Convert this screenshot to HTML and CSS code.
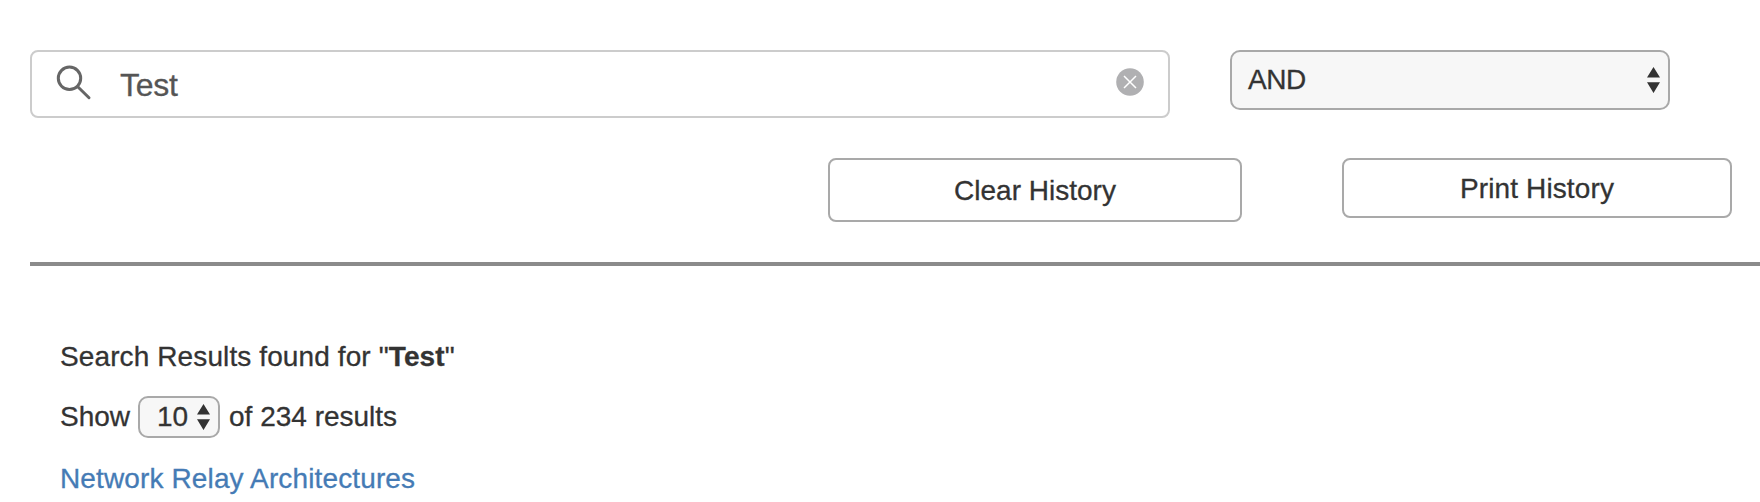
FILE: index.html
```
<!DOCTYPE html>
<html lang="en">
<head>
<meta charset="utf-8">
<title>Search Results</title>
<link rel="stylesheet" href="styles.css">
</head>
<body>
<header class="toolbar">
  <div class="search-row">
    <div class="search-box">
      <svg class="search-icon" width="36" height="36" viewBox="0 0 36 36"><circle cx="13.5" cy="13.3" r="11.2"/><path d="M21.5 21.5L33 32.7"/></svg>
      <span class="search-text">Test</span>
      <svg class="clear-icon" width="28" height="28" viewBox="0 0 28 28"><circle cx="14" cy="14" r="13.8"/><path d="M8 8L20 20M20 8L8 20"/></svg>
    </div>
    <div class="select operator">
      <span class="operator-text">AND</span>
      <svg class="arrows" width="14" height="26" viewBox="0 0 14 26"><path d="M6.5 0L13 10.5H0ZM0 15.2H13L6.5 26Z"/></svg>
    </div>
  </div>
  <div class="button-row">
    <div class="button clear-history"><span class="clear-text">Clear History</span></div>
    <div class="button print-history"><span class="print-text">Print History</span></div>
  </div>
</header>
<main class="results">
  <p class="summary">Search Results found for "<b>Test</b>"</p>
  <div class="paging">
    <span class="show-text">Show</span>
    <div class="select page-size">
      <span class="size-text">10</span>
      <svg class="arrows" width="14" height="26" viewBox="0 0 14 26"><path d="M6.5 0L13 10.5H0ZM0 15.2H13L6.5 26Z"/></svg>
    </div>
    <span class="count-text">of 234 results</span>
  </div>
  <a class="result-link">Network Relay Architectures</a>
</main>
</body>
</html>
```
FILE: styles.css
```
* { box-sizing: border-box; }

body {
  margin: 0;
  height: 502px;
  overflow: hidden;
  background: #fff;
  color: #333;
  font: 28px/40px "Liberation Sans", Arial, sans-serif;
  white-space: nowrap;
  -webkit-text-stroke: 0.3px currentColor;
}

.toolbar {
  height: 216px;
  margin: 50px 0 0 30px;
  border-bottom: 4px solid #8b8b8b;
}

.search-row {
  display: flex;
  align-items: flex-start;
  gap: 60px;
  height: 108px;
}

.search-box {
  display: flex;
  align-items: flex-start;
  width: 1140px;
  height: 68px;
  padding: 12px 24px 0;
  border: 2px solid #ccc;
  border-radius: 8px;
}

.search-icon {
  margin-top: 1px;
  fill: none;
  stroke: #666;
  stroke-width: 3;
  stroke-linecap: round;
}

.search-text {
  margin-left: 28px;
  color: #555;
  font-size: 32px;
  line-height: 42px;
  letter-spacing: -0.3px;
}

.clear-icon {
  margin: 4px 0 0 auto;
  fill: #b0b0b2;
}

.clear-icon path {
  stroke: #fff;
  stroke-width: 1.5;
}

.select {
  display: flex;
  border: 2px solid #a9a9a9;
  border-radius: 10px;
  background: #f7f7f7;
}

.arrows {
  flex: none;
  fill: #333;
}

.operator {
  justify-content: space-between;
  width: 440px;
  height: 60px;
  padding: 8px 7px 0 16px;
}

.operator-text { letter-spacing: -0.4px; }

.operator .arrows { margin-top: 7px; }

.button-row {
  display: flex;
  gap: 100px;
  margin-left: 798px;
}

.button {
  border: 2px solid #a9a9a9;
  border-radius: 8px;
  text-align: center;
}

.clear-history {
  width: 414px;
  height: 64px;
  padding-top: 11px;
}

.print-history {
  width: 390px;
  height: 60px;
  padding-top: 9px;
  letter-spacing: 0.12px;
}

.results {
  display: flex;
  flex-direction: column;
  padding: 71px 0 0 60px;
}

.summary {
  margin: 0;
  letter-spacing: 0.11px;
}

.paging {
  display: flex;
  height: 42px;
  margin: 19px 0 21px;
  line-height: 42px;
}

.show-text { width: 78px; }

.page-size {
  width: 82px;
  height: 42px;
  margin-right: 9px;
  padding: 0 7px 0 17px;
  justify-content: space-between;
}

.size-text { line-height: 38px; }

.page-size .arrows { margin-top: 6px; }

.result-link {
  color: #457bb5;
  letter-spacing: 0.13px;
}
```
